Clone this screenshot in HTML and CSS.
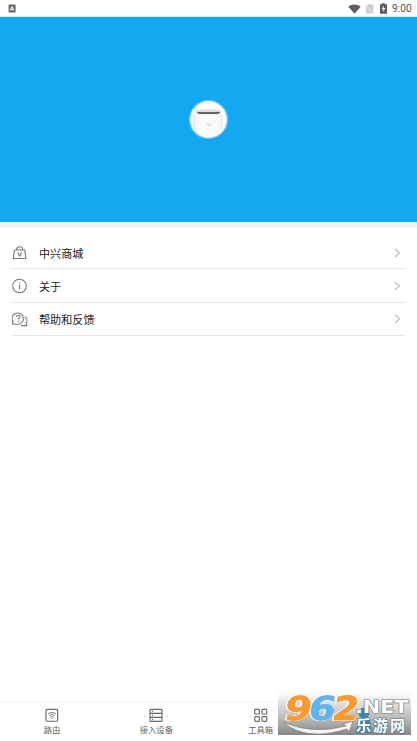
FILE: index.html
```html
<!DOCTYPE html>
<html lang="zh-CN">
<head>
<meta charset="utf-8">
<title>我的</title>
<link rel="stylesheet" href="styles.css">
</head>
<body>
<div class="app">
  <header class="status">
    <svg class="status-app" width="8" height="9" viewBox="0 0 8 9"><rect x=".6" y=".5" width="7" height="8" fill="#686868"/><path d="M2.3 6.5 4 2.5 5.8 6.5M2.9 5.3h2.2" fill="none" stroke="#fff" stroke-width="1"/></svg>
    <div class="status-right">
      <svg width="13" height="10" viewBox="0 0 13 10"><path d="M.3 2.7C3.8-.4 9.2-.4 12.7 2.7L6.5 9.8Z" fill="#606060"/></svg>
      <svg class="sim" width="9" height="10" viewBox="0 0 9 10"><path d="M3 .5H8.3V9.5H.8V3Z" fill="#cbcbcb"/><path d="M.3 1 8.6 9.6" stroke="#fff" stroke-width="1.5"/><path d="M0 .8 8.8 9.8" stroke="#aaa" stroke-width=".7"/></svg>
      <svg class="battery" width="7" height="11" viewBox="0 0 7 11"><path d="M0 1.3H2V.2H5V1.3H7V10.7H0Z" fill="#5d5d5d"/><path d="M4 2.5 1.5 6.2H3.3L2.9 9 5.5 5.2H3.7Z" fill="#fff"/></svg>
      <span class="clock">9:00</span>
    </div>
  </header>
  <section class="hero">
    <svg width="40" height="40" viewBox="0 0 40 40">
      <defs><linearGradient id="body" x2="1"><stop stop-color="#e6e6e6"/><stop offset=".17" stop-color="#fafafa"/><stop offset=".85" stop-color="#fafafa"/><stop offset="1" stop-color="#e9e9e9"/></linearGradient></defs>
      <circle cx="20.5" cy="20.5" r="19.5" fill="#77caf4"/><circle cx="20.5" cy="20.5" r="18.2" fill="#fff"/>
      <path d="M6 11.5Q20 8.5 34 11.5L35 29Q29 37 20 37T5 29Z" fill="url(#body)"/>
      <path d="M8 11.3Q20 9.4 33 11.3L31 15.5H10Z" fill="#ddd"/><path d="M8.5 13H32.5L30.5 15H10.8Z" fill="#666"/>
      <path d="M18.5 27V25H20.5V27M20.5 25H22.5V27" fill="none" stroke="#dedede"/>
    </svg>
  </section>
  <main class="menu">
    <a class="row">
      <svg class="icon" width="16" height="16" viewBox="0 0 16 16"><path d="M2.4 5H12.8L13.9 13.5H1.3ZM4.7 5V3.8Q4.9 1.7 7.6 1.7T10.5 3.8V5M5.6 7.2 7.6 11.3 9.6 7.2"/></svg>
      <span class="label">中兴商城</span>
      <svg class="chevron" width="7" height="10" viewBox="0 0 7 10"><path d="M1 1 5.5 5 1 9"/></svg>
    </a>
    <a class="row">
      <svg class="icon" width="16" height="16" viewBox="0 0 16 16"><circle cx="7.5" cy="8" r="6.8"/><path d="M7.6 6.7V11.5M7.6 4.2V5.2"/></svg>
      <span class="label">关于</span>
      <svg class="chevron" width="7" height="10" viewBox="0 0 7 10"><path d="M1 1 5.5 5 1 9"/></svg>
    </a>
    <a class="row">
      <svg class="icon" width="16" height="16" viewBox="0 0 16 16"><path d="M2.2 13H.5L1.2 10.9A5.6 5.6 0 1 1 5.9 13.2H2.2M12.7 5.5A5 5 0 0 1 14.2 12.3L14.8 14.6H11.5Q9.8 14.6 8.8 14M4.4 6Q4.5 4.3 6.3 4.3T8 5.9Q8 6.9 6.3 7.6V8.6M6.3 9.6V10.6"/></svg>
      <span class="label">帮助和反馈</span>
      <svg class="chevron" width="7" height="10" viewBox="0 0 7 10"><path d="M1 1 5.5 5 1 9"/></svg>
    </a>
  </main>
  <nav class="tabs">
    <a class="tab"><svg width="14" height="14" viewBox="0 0 14 14"><rect x="1" y="1.3" width="11.7" height="11.9" rx="1.5"/><path class="fine" d="M2.9 5.7Q6.9 2.8 10.9 5.7M4.1 7.5Q6.9 5.4 9.7 7.5M5.3 9.2Q6.9 8 8.5 9.2M6.4 10.6H7.4"/></svg><span>路由</span></a>
    <a class="tab"><svg width="14" height="14" viewBox="0 0 14 14"><rect x="1" y="1.4" width="12" height="12" rx="1"/><path d="M1 5.4H13M1 9.4H13M3 3.4H4M3 7.4H4M3 11.4H4"/></svg><span>接入设备</span></a>
    <a class="tab"><svg width="14" height="14" viewBox="0 0 14 14"><rect x=".7" y="1.3" width="4.7" height="4.7" rx=".8"/><rect x="8" y="1.3" width="4.7" height="4.7" rx=".8"/><rect x=".7" y="8.6" width="4.7" height="4.7" rx=".8"/><rect x="8" y="8.6" width="4.7" height="4.7" rx=".8"/></svg><span>工具箱</span></a>
    <a class="tab"></a>
  </nav>
  <svg class="mark" width="133" height="46" viewBox="0 0 133 46">
    <defs><linearGradient id="shade" x2="0" y2="1"><stop stop-color="#fff" stop-opacity="0"/><stop offset=".25" stop-color="#ddd" stop-opacity=".75"/><stop offset="1" stop-color="#858585"/></linearGradient></defs>
    <rect width="133" height="46" fill="url(#shade)"/>
    <g fill="#3687aa"><circle cx="86" cy="24" r="5.5"/><path d="M78 44 80 31Q86 27 92 31L94 44Z"/></g>
    <path d="M5 33Q34 46 68 37L65 35 75 32 71 43 69 40Q28 53 5 33Z" fill="#f3f3f3" stroke="#777" stroke-width=".6"/>
    <g class="digits"><text transform="translate(5 30.5) skewX(-10)" textLength="27" lengthAdjust="spacingAndGlyphs" fill="#f79a32" stroke="#f79a32">9</text><text transform="translate(29 30.5) skewX(-10)" textLength="27" lengthAdjust="spacingAndGlyphs" fill="#61b4e7" stroke="#61b4e7">6</text><text transform="translate(53 30.5) skewX(-10)" textLength="26" lengthAdjust="spacingAndGlyphs" fill="#f79a32" stroke="#f79a32">2</text></g>
    <text class="net" x="77" y="24" textLength="53.5" lengthAdjust="spacingAndGlyphs">.NET</text>
    <text class="site" x="78" y="41.5" textLength="49">乐游网</text>
  </svg>
</div>
</body>
</html>
```
FILE: styles.css
```css
* { box-sizing: border-box; }
body { margin: 0; background: #fff; font-family: "Noto Sans CJK SC", sans-serif; }
svg { display: block; flex: none; }
.app { position: relative; width: 417px; height: 741px; display: flex; flex-direction: column; padding-bottom: 6px; overflow: hidden; }
.status { height: 17px; flex: none; display: flex; justify-content: space-between; align-items: center; padding: 0 5px 0 8px; background: linear-gradient(#fff 16px, #cceeff 16px); }
.status-right { display: flex; align-items: center; }
.sim { margin-left: 4px; }
.battery { margin-left: 6px; }
.clock { margin-left: 5px; font: 10.2px/16px Roboto, sans-serif; color: #555; width: 20px; white-space: nowrap; }
.hero { height: 205px; flex: none; display: flex; align-items: center; justify-content: center; background: #14a8f0; }
.hero svg { margin: 0 1px 1px 0; }
.menu { border-top: 6px solid #f1f1f1; padding: 8px 11px 0; flex: 1; }
.row { height: 33.3px; padding-top: 1px; display: flex; align-items: center; border-bottom: 1px solid #e7e7e7; }
.icon { margin-left: 1px; fill: none; stroke: #777; stroke-width: 1.1; stroke-linejoin: round; }
.label { flex: 1; margin-left: 11px; font-size: 11.1px; line-height: 18px; color: #222; font-weight: 400; }
.chevron { margin-right: 5px; fill: none; stroke: #bbb; stroke-width: 1.1; }
.tabs { height: 34px; flex: none; display: grid; grid-template-columns: repeat(4, 1fr); border-top: 1px solid #f4f4f4; }
.tab { display: flex; flex-direction: column; align-items: center; padding-top: 6px; font-size: 8.3px; line-height: 13px; color: #666; }
.tab span { margin-top: 1px; }
.tab svg { fill: none; stroke: #696969; stroke-width: 1.15; }
.tab .fine { stroke-width: .9; }
.mark { position: absolute; left: 278px; top: 689px; }
.digits { font: bold 33px "DejaVu Sans", sans-serif; stroke-width: .8px; filter: drop-shadow(.7px 0 #fff) drop-shadow(-.7px 0 #fff) drop-shadow(0 .7px #fff); }
.net { font: bold 17.5px "DejaVu Sans", sans-serif; fill: #fff; stroke: #777; stroke-width: 1.2px; paint-order: stroke; }
.site { font: bold 15px "Noto Sans CJK SC", sans-serif; fill: #fff; stroke: #557785; stroke-width: 1.2px; paint-order: stroke; }
```
